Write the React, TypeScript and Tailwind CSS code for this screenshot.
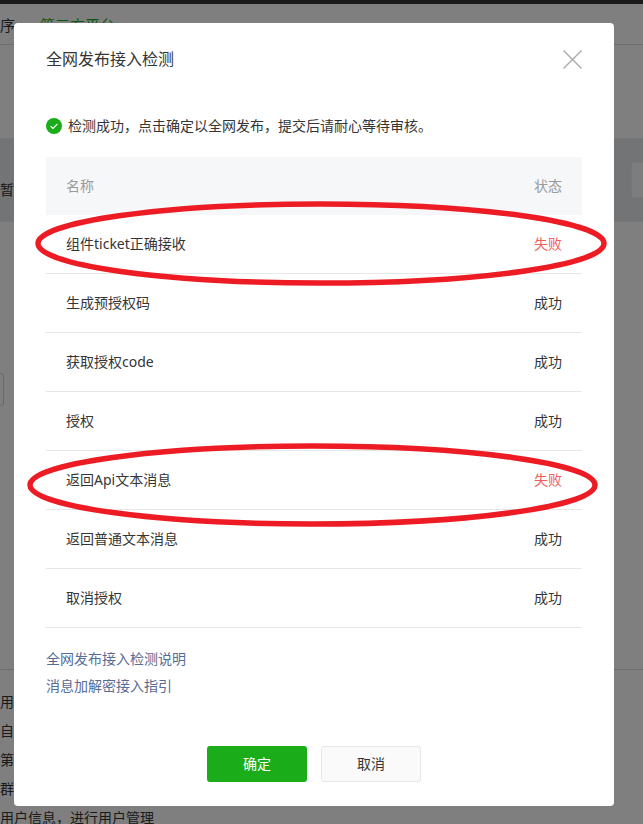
const font = {
  fontFamily: '"Noto Sans", "Noto Sans CJK SC", sans-serif',
};

const rows = [
  { name: "组件ticket正确接收", ok: false },
  { name: "生成预授权码", ok: true },
  { name: "获取授权code", ok: true },
  { name: "授权", ok: true },
  { name: "返回Api文本消息", ok: false },
  { name: "返回普通文本消息", ok: true },
  { name: "取消授权", ok: true },
];

const notice = "检测成功\uFF0C点击确定以全网发布\uFF0C提交后请耐心等待审核。";

// greyed out page behind the dialog
const Page = () => {
  return (
    <div className="h-[824px] overflow-hidden bg-white text-sm text-[#353535]">
      <div className="h-1 bg-[#343434]" />
      <div className="flex h-[41px] items-center gap-[25px] border-b border-[#dcdcdc] pt-[2px] text-[15px] leading-none">
        <span>序</span>
        <span className="text-[#1aad19]">第三方平台</span>
      </div>
      <div className="mt-[93px] flex h-[84px] items-start justify-between bg-[#e6e8ea]">
        <span className="mt-[42px] leading-5">暂</span>
        <div className="mt-[24px] -mr-[20px] h-[36px] w-[32px] rounded-[3px] border border-[#ececec] bg-[#fafafa]" />
      </div>
      <div className="mt-[151px] -ml-[10px] h-[33px] w-[14px] rounded-[3px] border border-[#cfcfcf]" />
      <div className="mt-[263px] border-b border-[#dcdcdc]" />
      <ul className="mt-[22px] flex flex-col gap-[9px] leading-5">
        <li>用</li>
        <li>自</li>
        <li>第</li>
        <li>群</li>
        <li>{"用户信息\uFF0C进行用户管理"}</li>
      </ul>
    </div>
  );
};

const SuccessIcon = () => (
  <svg width="16" height="16" viewBox="0 0 16 16" className="shrink-0">
    <circle cx="8" cy="8" r="8" fill="#1aad19" />
    <path d="M4.6 8.2l2.4 2.3 4.4-4.6" fill="none" stroke="#fff" strokeWidth="1.2" />
  </svg>
);

const CloseIcon = () => (
  <svg width="19" height="19" viewBox="0 0 19 19">
    <path d="M0.5 0.5l18 18M18.5 0.5l-18 18" stroke="#a9a9a9" strokeWidth="1.4" fill="none" />
  </svg>
);

const Dialog = () => {
  return (
    <div className="absolute left-[14px] top-[23px] h-[783px] w-[600px] rounded-[4px] bg-white px-8 text-sm text-[#353535]">
      <div className="flex items-center justify-between pt-[26px]">
        <h3 className="text-base leading-[20px]">全网发布接入检测</h3>
        <CloseIcon />
      </div>

      <div className="mt-[47px] flex items-center gap-[6px] leading-5">
        <SuccessIcon />
        <p>{notice}</p>
      </div>

      <table className="mt-[21px] w-full border-separate border-spacing-0">
        <thead>
          <tr className="h-[58px] bg-[#f6f7f9] text-[#9a9a9a]">
            <th className="pl-5 text-left font-normal">名称</th>
            <th className="pr-5 text-right font-normal">状态</th>
          </tr>
        </thead>
        <tbody>
          {rows.map((row) => (
            <tr key={row.name} className="h-[59px]">
              <td className="border-b border-[#e7e7e7] pl-5">{row.name}</td>
              <td className={`border-b border-[#e7e7e7] pr-5 text-right ${row.ok ? "" : "text-[#f25c5c]"}`}>
                {row.ok ? "成功" : "失败"}
              </td>
            </tr>
          ))}
        </tbody>
      </table>

      <div className="mt-[21px] flex flex-col gap-[7px] leading-5 text-[#576b95]">
        <a>全网发布接入检测说明</a>
        <a>消息加解密接入指引</a>
      </div>

      <div className="mt-[50px] flex justify-center gap-[14px]">
        <button className="h-9 w-[100px] rounded-[3px] bg-[#1aad19] text-white">确定</button>
        <button className="h-9 w-[100px] rounded-[3px] border border-[#e7e7e7] bg-[#fafafa]">取消</button>
      </div>
    </div>
  );
};

export default function App() {
  return (
    <div className="relative h-[824px] overflow-hidden" style={font}>
      <Page />
      <div className="absolute inset-0 bg-black/50" />
      <Dialog />
      {/* red marks drawn on top of the screenshot */}
      <svg className="absolute left-0 top-0" width="643" height="824" fill="none" stroke="#ed1c24" strokeWidth="5.5">
        <ellipse cx="321" cy="243.5" rx="283" ry="39.5" />
        <ellipse cx="312.5" cy="485" rx="282.5" ry="39" />
      </svg>
    </div>
  );
}
